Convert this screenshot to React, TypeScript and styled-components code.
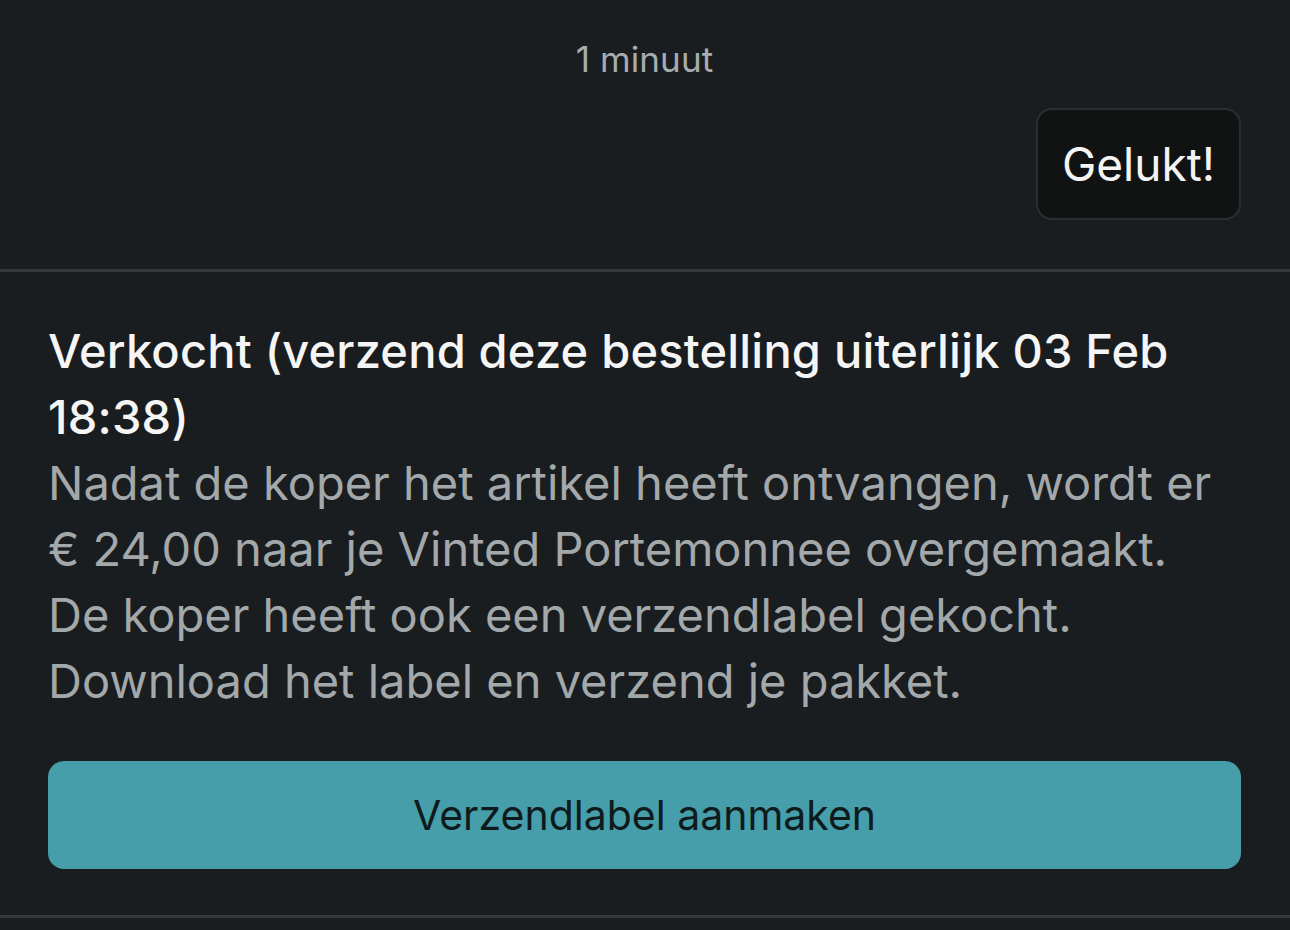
import React from 'react'
import styled, { createGlobalStyle } from 'styled-components'

const GlobalStyle = createGlobalStyle`
    html, body {
        margin: 0;
        padding: 0;
        background: #1a1d1f;
    }
    body {
        font-family: Inter, 'Noto Sans', sans-serif;
        -webkit-font-smoothing: antialiased;
    }
`

const Screen = styled.div`
    width: 1290px;
    height: 930px;
    overflow: hidden;
    background: #1a1d1f;
    display: flex;
    flex-direction: column;
`

const ChatSection = styled.section`
    display: flex;
    flex-direction: column;
    padding: 36px 49px 49px 48px;
    border-bottom: 3px solid #34383a;
`

const Timestamp = styled.div`
    text-align: center;
    color: #a7acaf;
    font-size: 35px;
    line-height: 46px;
    letter-spacing: 0.1px;
`

const Bubble = styled.div`
    box-sizing: border-box;
    align-self: flex-end;
    margin-top: 26px;
    padding: 0 24px;
    height: 112px;
    display: flex;
    align-items: center;
    background: #111313;
    border: 2px solid #2b2e30;
    border-radius: 16px;
    color: #f4f4f4;
    font-size: 46px;
`

const OrderSection = styled.section`
    display: flex;
    flex-direction: column;
    padding: 46px 49px 46px 48px;
    border-bottom: 3px solid #34383a;
`

const Title = styled.h2`
    margin: 0;
    color: #f5f5f5;
    font-size: 47px;
    font-weight: 500;
    line-height: 66px;
    letter-spacing: 0.2px;
`

const Body = styled.p`
    margin: 0;
    color: #a3a8ab;
    font-size: 47px;
    font-weight: 400;
    line-height: 66px;
`

const ActionButton = styled.button`
    box-sizing: border-box;
    margin-top: 47px;
    height: 108px;
    width: 100%;
    border: none;
    border-radius: 16px;
    background: #459ea9;
    color: #0f1a1c;
    font-family: inherit;
    font-size: 41px;
    cursor: pointer;
`

export default function App() {
    return (
        <Screen>
            <GlobalStyle />
            <ChatSection>
                <Timestamp>1 minuut</Timestamp>
                <Bubble>Gelukt!</Bubble>
            </ChatSection>
            <OrderSection>
                <Title>
                    Verkocht (verzend deze bestelling uiterlijk 03 Feb 18:38)
                </Title>
                <Body>
                    Nadat de koper het artikel heeft ontvangen, wordt er
                    <br />€ 24,00 naar je Vinted Portemonnee overgemaakt.
                    <br />
                    De koper heeft ook een verzendlabel gekocht.
                    <br />
                    Download het label en verzend je pakket.
                </Body>
                <ActionButton>Verzendlabel aanmaken</ActionButton>
            </OrderSection>
        </Screen>
    )
}
